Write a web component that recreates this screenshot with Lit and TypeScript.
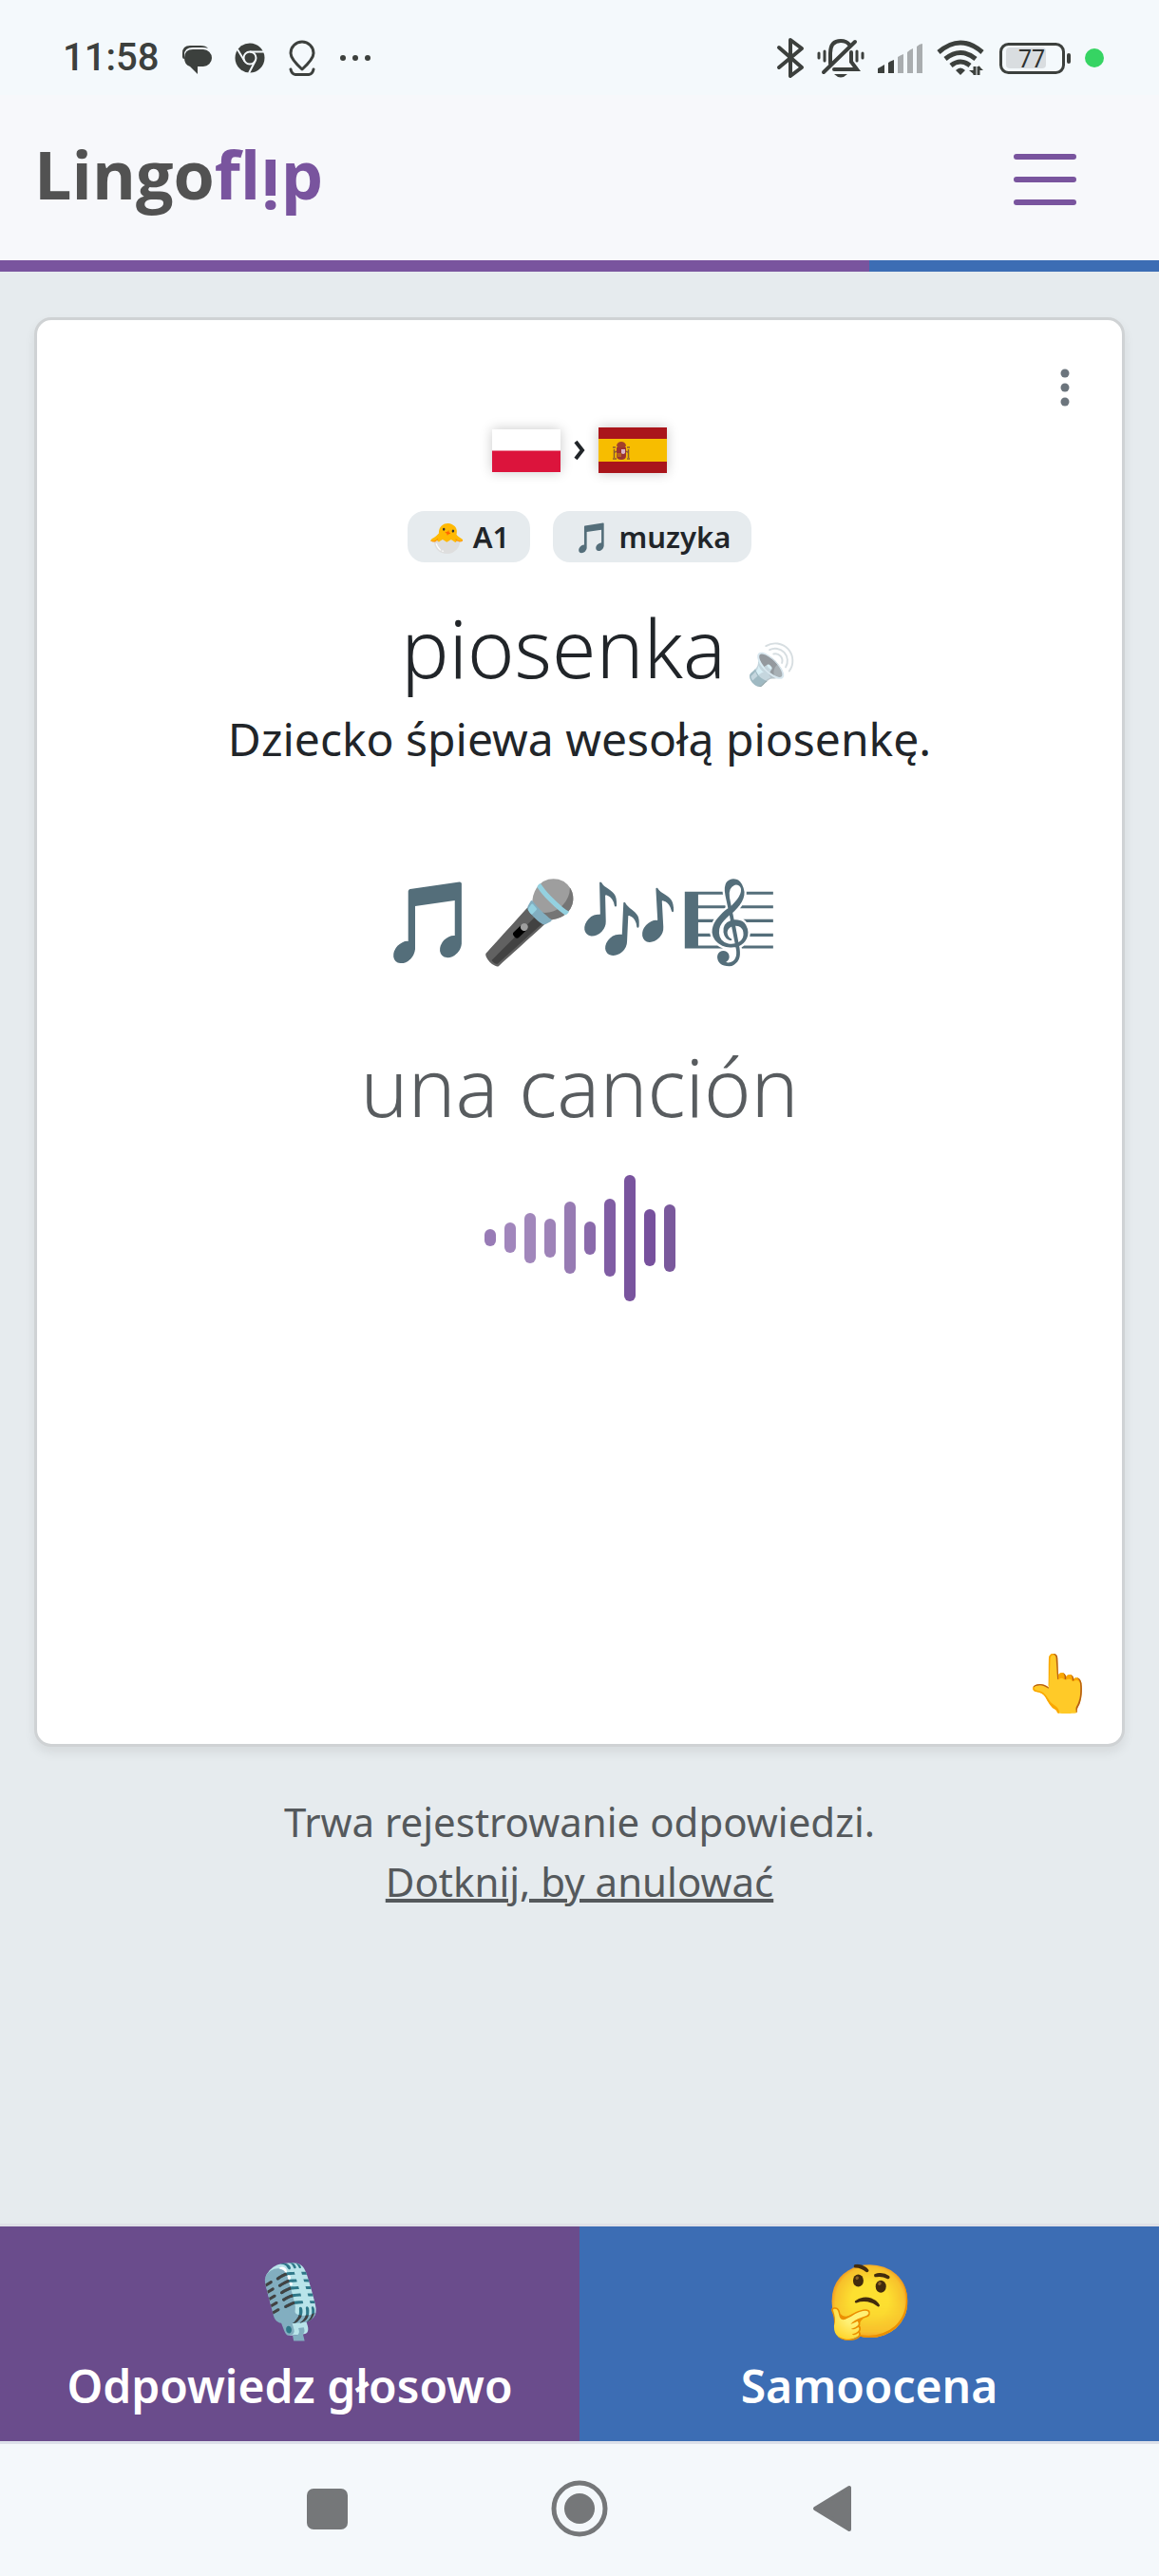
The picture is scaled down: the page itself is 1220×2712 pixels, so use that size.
import { LitElement, html, css, svg } from "lit";
import { customElement, property } from "lit/decorators.js";

interface Bar {
  height: number;
  color: string;
}

const WAVE: Bar[] = [
  { height: 18, color: "#987bb6" },
  { height: 32, color: "#a186bc" },
  { height: 53, color: "#a187bb" },
  { height: 41, color: "#9e83b8" },
  { height: 76, color: "#977bb3" },
  { height: 35, color: "#8a6aab" },
  { height: 82, color: "#805da4" },
  { height: 133, color: "#79549e" },
  { height: 60, color: "#77519d" },
  { height: 71, color: "#7a599c" },
];

@customElement("status-bar")
export class StatusBar extends LitElement {
  static styles = css`
    :host {
      display: flex;
      align-items: center;
      justify-content: space-between;
      height: 100px;
      padding: 22px 58px 0 66px;
      box-sizing: border-box;
      background: #f4f9fc;
      color: #3c403d;
      font-family: Roboto, "Liberation Sans", sans-serif;
    }
    .group {
      display: flex;
      align-items: center;
    }
    .left {
      gap: 24px;
    }
    .right {
      gap: 13px;
    }
    .time {
      font-size: 40px;
      line-height: 44px;
      font-weight: 500;
    }
    svg {
      display: block;
    }
  `;

  render() {
    return html`
      <div class="group left">
        <span class="time">11:58</span>
        <svg width="32" height="40" viewBox="0 0 32 40" fill="#3c403d" aria-hidden="true">
          <path d="M1 19V15Q1 7 9 7H20Q26 7 28 10Q26 9 22 9H12Q3 9 3 17V21Q1 21 1 19Z" />
          <path d="M12 11H23A9 9 0 0 1 23 29H17V37L9 29Q3 27 3 20Q3 11 12 11Z" />
        </svg>
        <svg width="32" height="40" viewBox="0 0 32 40" aria-hidden="true">
          <circle cx="16" cy="20" r="15.500" fill="#3c403d" />
          <g stroke="#f4f9fc" stroke-width="2" fill="none">
            <circle cx="16" cy="20" r="6.500" />
            <path d="M16 13.500H31M10.400 23.200L3 11M21.600 23.200L15 36" />
          </g>
        </svg>
        <svg width="30" height="40" viewBox="0 0 30 40" fill="none" stroke="#3c403d" stroke-width="3" stroke-linejoin="round" stroke-linecap="round" aria-hidden="true">
          <path d="M15 32Q3 21 3 15A12 12 0 0 1 27 15Q27 21 15 32Z" />
          <path d="M3 32Q4 37 8 37.500H22Q26 37 27 32" />
        </svg>
        <svg width="34" height="40" viewBox="0 0 34 40" fill="#3c403d" aria-hidden="true">
          <circle cx="4" cy="20" r="3" />
          <circle cx="17" cy="20" r="3" />
          <circle cx="30" cy="20" r="3" />
        </svg>
      </div>
      <div class="group right">
        <svg width="30" height="44" viewBox="0 0 30 44" fill="none" stroke="#3c403d" stroke-width="4" stroke-linejoin="round" stroke-linecap="round" aria-hidden="true">
          <path d="M3 11L27 32L15 41V3L27 12L3 32" />
        </svg>
        <svg width="50" height="44" viewBox="0 0 50 44" fill="none" stroke="#3c403d" stroke-width="4" stroke-linecap="round" aria-hidden="true">
          <path d="M14 28V17Q14 4 25 4Q31 4 34 8M36 16V26L42 34H18" />
          <path d="M7 37L40 5" />
          <path d="M2 17V22M8 15V25M42 15V25M48 17V22" stroke-width="3" />
          <path d="M18 39H32Q25 46 18 39Z" fill="#3c403d" stroke="none" />
        </svg>
        <svg width="50" height="40" viewBox="0 0 50 40" aria-hidden="true">
          <g fill="#3c403d">
            <path d="M1 36V31Q5 29 8 27V36Q4 36 1 36Z" />
            <path d="M12 36V25Q15 23 18 22V36Z" />
          </g>
          <g fill="#a9adaf">
            <path d="M22 36V19Q25 17 28 16V36ZM32 36V14Q35 11 38 10V36ZM42 36V8Q45 5 48 5V36Z" />
          </g>
        </svg>
        <svg width="52" height="40" viewBox="0 0 52 40" fill="none" stroke="#3c403d" stroke-width="5" aria-hidden="true">
          <path d="M2 14Q25 -6 48 14" />
          <path d="M9 21Q25 8 41 21" />
          <path d="M15 28Q25 20 35 28" />
          <path d="M20 33Q25 28 30 33L25 38Z" fill="#3c403d" stroke="none" />
          <path d="M40 29V38M44 29V38" stroke-width="3" />
          <path d="M34 33H40V38ZM49 33H44V28Z" fill="#3c403d" stroke="none" />
        </svg>
        <svg width="78" height="40" viewBox="0 0 78 40" aria-hidden="true">
          <rect x="2.500" y="5.500" width="66" height="30" rx="8" fill="none" stroke="#3c403d" stroke-width="3" />
          <rect x="8" y="9" width="42" height="22" rx="4" fill="#d9dde0" />
          <rect x="72" y="15" width="4" height="11" rx="2" fill="#3c403d" />
          <text x="35" y="30" text-anchor="middle" font-size="25" font-family="Roboto, sans-serif" fill="#2e3230">77</text>
        </svg>
        <svg width="20" height="20" viewBox="0 0 20 20" aria-hidden="true">
          <circle cx="10" cy="10" r="10" fill="#36d463" />
        </svg>
      </div>
    `;
  }
}

@customElement("site-header")
export class SiteHeader extends LitElement {
  @property({ type: Number }) progress = 75;

  static styles = css`
    :host {
      display: block;
    }
    .bar {
      display: flex;
      align-items: center;
      justify-content: space-between;
      height: 174px;
      padding: 0 78px 0 36px;
      box-sizing: border-box;
      background: #f7f8fb;
    }
    .logo {
      padding-bottom: 8px;
      font-family: "Open Sans", "Noto Sans", sans-serif;
      font-size: 70px;
      line-height: 96px;
      font-weight: 700;
      color: #525252;
      text-decoration: none;
    }
    .accent {
      color: #79549e;
    }
    /* The "i" stands on its head, with its dot under the baseline. */
    .flipped {
      display: inline-block;
      line-height: 72px;
      vertical-align: -12px;
      transform: rotate(180deg);
    }
    .menu {
      border: 0;
      background: none;
      padding: 8px;
    }
    .menu svg {
      display: block;
    }
    .progress {
      height: 12px;
      background: #3c6db4;
    }
    .fill {
      height: 12px;
      background: #79549e;
    }
  `;

  render() {
    return html`
      <div class="bar">
        <a class="logo" href="#">Lingo<span class="accent">fl<span class="flipped">i</span>p</span></a>
        <button class="menu" aria-label="Menu">
          <svg width="68" height="60" viewBox="0 0 68 60" stroke="#79549e" stroke-width="6" stroke-linecap="round">
            <path d="M4 8H64M4 32H64M4 56H64" />
          </svg>
        </button>
      </div>
      <div class="progress"><div class="fill" style="width:${this.progress}%"></div></div>
    `;
  }
}

@customElement("flash-card")
export class FlashCard extends LitElement {
  static styles = css`
    :host {
      display: flex;
      flex-direction: column;
      position: relative;
      box-sizing: border-box;
      align-items: center;
      padding: 113px 24px 24px;
      border: 3px solid #cfd2d4;
      border-radius: 18px;
      background: #fff;
      box-shadow: 0 6px 12px rgba(0, 0, 0, 0.075);
      color: #212529;
      text-align: center;
    }
    button {
      border: 0;
      background: none;
      font: inherit;
      color: inherit;
      padding: 0;
    }
    svg {
      display: block;
    }
    .more {
      position: absolute;
      top: 47px;
      right: 50px;
    }
    .langs {
      display: flex;
      align-items: center;
      gap: 14px;
      height: 48px;
    }
    .flag {
      box-shadow: 0 0 12px rgba(0, 0, 0, 0.22);
    }
    .tags {
      display: flex;
      gap: 24px;
      margin-top: 40px;
    }
    .tag {
      height: 54px;
      padding: 0 22px;
      border-radius: 18px;
      background: #e6ebee;
      font-size: 31px;
      line-height: 54px;
      font-weight: 600;
    }
    .word {
      margin: 36px 0 0;
      font-size: 84px;
      line-height: 108px;
      font-weight: 300;
    }
    /* Pulled out of the line's width so that the word itself stays near the middle. */
    .speaker {
      margin-right: -40px;
      font-size: 42px;
      line-height: 48px;
      opacity: 0.5;
    }
    .sentence {
      margin: 6px 0 0;
      font-size: 48px;
      line-height: 72px;
    }
    .emojis {
      margin-top: 94px;
      font-size: 84px;
      line-height: 120px;
    }
    .answer {
      margin: 62px 0 0;
      font-size: 84px;
      line-height: 108px;
      font-weight: 300;
      color: #585c5f;
    }
    .wave {
      display: flex;
      align-items: center;
      gap: 9px;
      height: 134px;
      margin-top: 38px;
    }
    .wave-bar {
      width: 12px;
      border-radius: 6px;
    }
    .hint {
      position: absolute;
      right: 28px;
      bottom: 32px;
      font-size: 60px;
      line-height: 68px;
    }
  `;

  render() {
    return html`
      <button class="more" aria-label="Opcje">
        <svg width="20" height="48" viewBox="0 0 20 48" fill="#6c757d">
          <circle cx="10" cy="9" r="4.500" />
          <circle cx="10" cy="24" r="4.500" />
          <circle cx="10" cy="39" r="4.500" />
        </svg>
      </button>
      <div class="langs">
        <svg class="flag" width="72" height="45" viewBox="0 0 72 45" role="img" aria-label="PL">
          <rect width="72" height="45" fill="#fff" />
          <rect y="22.500" width="72" height="22.500" fill="#dc143c" />
        </svg>
        <svg width="12" height="24" viewBox="0 0 12 24" fill="none" stroke="#212529" stroke-width="4" aria-hidden="true">
          <path d="M2 3L9 12L2 21" />
        </svg>
        <svg class="flag" width="72" height="48" viewBox="0 0 72 48" role="img" aria-label="ES">
          <rect width="72" height="48" fill="#aa151b" />
          <rect y="12" width="72" height="24" fill="#f7bd00" />
          ${svg`<g>
            <path d="M19 19Q20 15 24 15Q28 15 29 19L28 21H20Z" fill="#a2402a" />
            <path d="M19 21H29V30Q29 34 24 34Q19 34 19 30Z" fill="#9c3432" />
            <path d="M24 23H28V27Q26 29 24 27Z" fill="#d9b3c8" />
            <path d="M19 27H24V31H20Z" fill="#b5651d" />
            <path d="M15 21H18M15 33H19M30 33H33M30 21H33M16.500 23V32M31.500 23V32M16 27L19 25M32 27L29 25" stroke="#8d5b32" stroke-width="1.500" />
          </g>`}
        </svg>
      </div>
      <div class="tags">
        <span class="tag">🐣 A1</span>
        <span class="tag">🎵 muzyka</span>
      </div>
      <h1 class="word">piosenka <button class="speaker" aria-label="Odtwórz">🔊</button></h1>
      <p class="sentence">Dziecko śpiewa wesołą piosenkę.</p>
      <div class="emojis">🎵🎤🎶🎼</div>
      <h2 class="answer">una canción</h2>
      <div class="wave" aria-hidden="true">
        ${WAVE.map((b) => html`<div class="wave-bar" style="height:${b.height}px;background:${b.color}"></div>`)}
      </div>
      <span class="hint">👆</span>
    `;
  }
}

@customElement("app-root")
export class AppRoot extends LitElement {
  static styles = css`
    :host {
      display: flex;
      flex-direction: column;
      min-height: 100vh;
      background: #e6ebee;
      font-family: "Noto Sans", "Open Sans", sans-serif;
    }
    main {
      display: grid;
      grid-template-rows: 3fr 1fr;
      flex: 1;
      padding: 48px 36px 0;
    }
    .note {
      padding-top: 47px;
      font-size: 42px;
      line-height: 63px;
      text-align: center;
      color: #55595c;
    }
    .note p {
      margin: 0;
    }
    .note a {
      color: inherit;
      text-decoration-thickness: 4px;
    }
    .actions {
      display: grid;
      grid-template-columns: 1fr 1fr;
      border-top: 3px solid #dfe0e7;
      border-bottom: 3px solid #dce0ea;
    }
    .action {
      display: flex;
      flex-direction: column;
      align-items: center;
      gap: 4px;
      height: 226px;
      padding: 24px 0 0;
      border: 0;
      background: #6a4c8c;
      color: #fff;
      font-family: inherit;
      font-size: 48px;
      line-height: 72px;
      font-weight: 600;
    }
    .self {
      background: #3c6db4;
    }
    .icon {
      font-size: 75px;
      line-height: 104px;
    }
    nav {
      display: flex;
      align-items: center;
      justify-content: center;
      gap: 206px;
      height: 139px;
      padding-bottom: 3px;
      box-sizing: border-box;
      background: #f4f8fb;
    }
    .key {
      border: 0;
      padding: 0;
      background: none;
    }
    .key svg {
      display: block;
    }
  `;

  render() {
    return html`
      <status-bar></status-bar>
      <site-header></site-header>
      <main>
        <flash-card></flash-card>
        <div class="note">
          <p>Trwa rejestrowanie odpowiedzi.</p>
          <a href="#">Dotknij, by anulować</a>
        </div>
      </main>
      <div class="actions">
        <button class="action"><span class="icon">🎙️</span>Odpowiedz głosowo</button>
        <button class="action self"><span class="icon">🤔</span>Samoocena</button>
      </div>
      <nav>
        <button class="key" aria-label="Ostatnie">
          <svg width="60" height="60" viewBox="0 0 60 60"><rect x="9" y="9" width="43" height="43" rx="7" fill="#757779" /></svg>
        </button>
        <button class="key" aria-label="Start">
          <svg width="60" height="60" viewBox="0 0 60 60">
            <circle cx="30" cy="30" r="27" fill="none" stroke="#757779" stroke-width="5" />
            <circle cx="30" cy="30" r="16" fill="#757779" />
          </svg>
        </button>
        <button class="key" aria-label="Wstecz">
          <svg width="60" height="60" viewBox="0 0 60 60">
            <path d="M12 30L48 8V52Z" fill="#757779" stroke="#757779" stroke-width="4" stroke-linejoin="round" />
          </svg>
        </button>
      </nav>
    `;
  }
}
